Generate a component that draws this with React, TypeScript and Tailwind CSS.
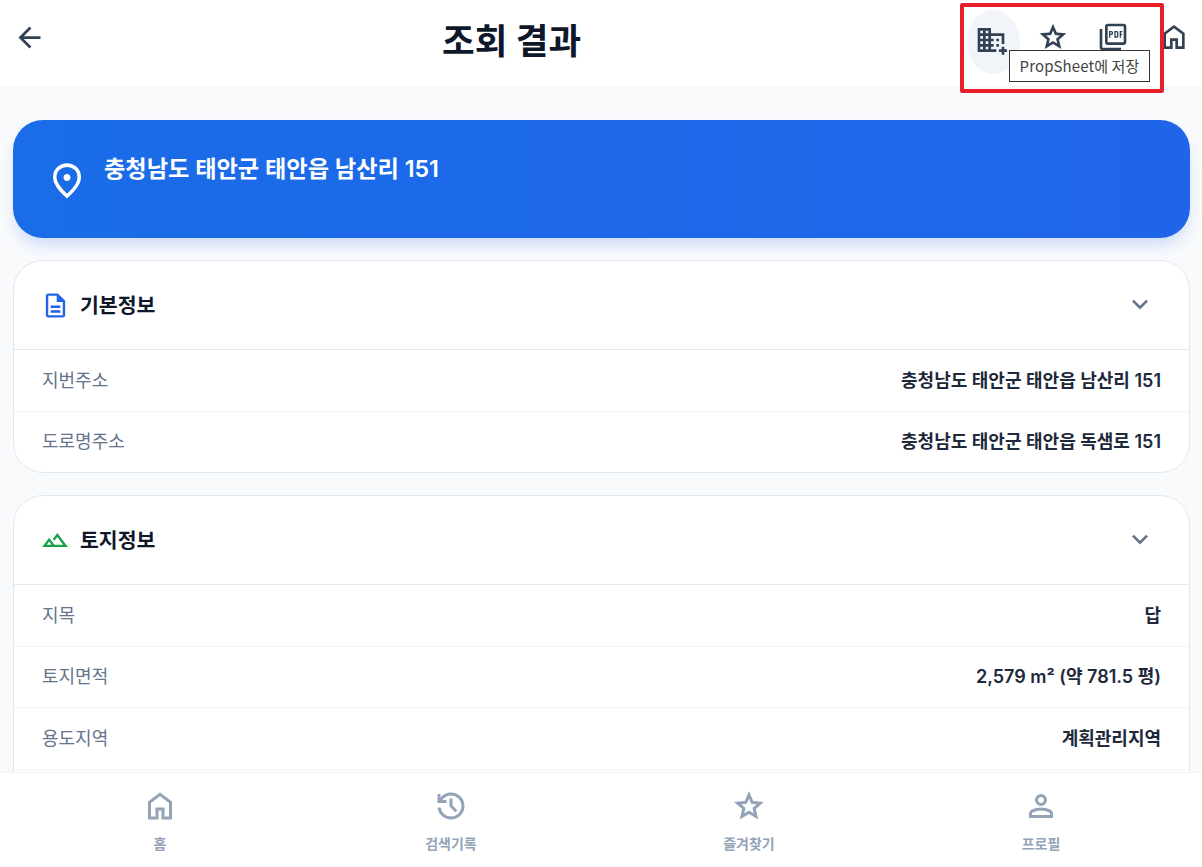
import React from 'react';

// Material Symbols outlines, 960 grid
const paths = {
  back: 'm313-440 224 224-57 56-320-320 320-320 57 56-224 224h487v80H313Z',
  domainAdd:
    'M80-120v-720h400v160h400v320h-80v-240H480v80h80v80h-80v80h80v80h-80v80h160v80H80Zm80-80h80v-80h-80v80Zm0-160h80v-80h-80v80Zm0-160h80v-80h-80v80Zm0-160h80v-80h-80v80Zm160 480h80v-80h-80v80Zm0-160h80v-80h-80v80Zm0-160h80v-80h-80v80Zm0-160h80v-80h-80v80ZM800-40v-80h-80v-80h80v-80h80v80h80v80h-80v80h-80ZM640-440v-80h80v80h-80Zm0 160v-80h80v80h-80Z',
  star: 'm354-287 126-76 126 77-33-144 111-96-146-13-58-136-58 135-146 13 111 97-33 143ZM233-120l65-281L80-590l288-25 112-265 112 265 288 25-218 189 65 281-247-149-247 149Z',
  pdf: 'M360-460h40v-80h40q17 0 28.5-11.5T480-580v-40q0-17-11.5-28.5T440-660h-80v200Zm40-120v-40h40v40h-40Zm120 120h80q17 0 28.5-11.5T640-500v-120q0-17-11.5-28.5T600-660h-80v200Zm40-40v-120h40v120h-40Zm120 40h40v-80h40v-40h-40v-40h40v-40h-80v200ZM320-240q-33 0-56.5-23.5T240-320v-480q0-33 23.5-56.5T320-880h480q33 0 56.5 23.5T880-800v480q0 33-23.5 56.5T800-240H320Zm0-80h480v-480H320v480ZM160-80q-33 0-56.5-23.5T80-160v-560h80v560h560v80H160Zm160-720v480-480Z',
  home: 'M240-200h120v-240h240v240h120v-360L480-740 240-560v360Zm-80 80v-480l320-240 320 240v480H520v-240h-80v240H160Z',
  pin: 'M480-480q33 0 56.5-23.5T560-560q0-33-23.5-56.5T480-640q-33 0-56.5 23.5T400-560q0 33 23.5 56.5T480-480Zm0 294q122-112 181-203.5T720-560q0-109-69.5-174.5T480-800q-101 0-170.5 65.5T240-560q0 71 59 162.5T480-186Zm0 106Q319-217 239.5-334.5T160-560q0-150 96.5-239T480-888q127 0 223.5 89T800-560q0 100-79.5 217.5T480-80Z',
  doc: 'M320-240h320v-80H320v80Zm0-160h320v-80H320v80ZM240-80q-33 0-56.5-23.5T160-160v-640q0-33 23.5-56.5T240-880h320l240 240v480q0 33-23.5 56.5T720-80H240Zm280-520v-200H240v640h480v-440H520ZM240-800v200-200 640-640Z',
  terrain: 'm40-240 240-320 180 240h300L560-586 460-454l-50-66 150-200 360 480H40Zm521-80Zm-361 0h160l-80-107-80 107Zm0 0h160-160Z',
  chevron: 'M480-344 240-584l56-56 184 184 184-184 56 56-240 240Z',
  history:
    'M480-120q-138 0-240.5-91.5T122-440h82q14 104 92.5 172T480-200q117 0 198.5-81.5T760-480q0-117-81.5-198.5T480-760q-69 0-129 32t-101 88h110v80H120v-240h80v94q51-64 124.5-99T480-840q150 0 255 105t105 255q0 150-105 255T480-120Zm112-192L440-464v-216h80v184l128 128-56 56Z',
  person:
    'M480-480q-66 0-113-47t-47-113q0-66 47-113t113-47q66 0 113 47t47 113q0 66-47 113t-113 47ZM160-160v-112q0-34 17.5-62.5T224-378q62-31 126-46.5T480-440q66 0 130 15.5T736-378q29 15 46.5 43.5T800-272v112H160Zm80-80h480v-32q0-11-5.5-20T700-306q-54-27-109-40.5T480-360q-56 0-111 13.5T260-306q-9 5-14.5 14t-5.5 20v32Zm240-320q33 0 56.5-23.5T560-640q0-33-23.5-56.5T480-720q-33 0-56.5 23.5T400-640q0 33 23.5 56.5T480-560Zm0-80Zm0 400Z',
};

const Icon: React.FC<{ name: keyof typeof paths; className: string }> = ({ name, className }) => (
  <svg viewBox="0 -960 960 960" fill="currentColor" className={`shrink-0 ${className}`}>
    <path d={paths[name]} />
  </svg>
);

const Row: React.FC<{ label: string; value: string; last?: boolean }> = ({ label, value, last }) => (
  <div className={`flex items-center justify-between px-[28px] ${last ? 'h-[60.5px]' : 'h-[61.5px] border-b border-[#f1f5f9]'}`}>
    <span className="text-[18px] text-[#64748b]">{label}</span>
    <span className="text-[18px] font-semibold text-[#1e293b]">{value}</span>
  </div>
);

const Section: React.FC<{ icon: React.ReactNode; title: string; children: React.ReactNode }> = ({ icon, title, children }) => (
  <section className="overflow-hidden rounded-[30px] border border-[#e2e8f0] bg-white">
    <div className="flex h-[89px] items-center justify-between border-b border-[#e2e8f0] pl-[26px] pr-[33px]">
      <div className="flex items-center gap-[10px]">
        <div className="flex w-[30px] justify-center">{icon}</div>
        <h2 className="mt-[3px] text-[20.5px] font-bold text-[#0f172a]">{title}</h2>
      </div>
      <Icon name="chevron" className="h-[32px] w-[32px] text-[#64748b]" />
    </div>
    {children}
  </section>
);

const tabs = [
  { icon: 'home' as const, label: '홈', box: 'ml-[144px] w-[32px]' },
  { icon: 'history' as const, label: '검색기록', box: 'ml-[249px] w-[52px]' },
  { icon: 'star' as const, label: '즐겨찾기', box: 'ml-[246px] w-[52px]' },
  { icon: 'person' as const, label: '프로필', box: 'ml-[246px] w-[40px]' },
];

export default function App() {
  return (
    <div className="relative flex h-[867px] flex-col overflow-hidden bg-[#f8fafc] font-['Inter','Noto_Sans_CJK_KR',sans-serif]">
      <header className="relative flex h-[87px] shrink-0 items-start border-b border-[#f1f5f9] bg-white">
        <Icon name="back" className="ml-[13px] mt-[21px] h-[33px] w-[33px] text-[#334155]" />
        <h1 className="absolute left-[442px] top-[18px] text-[35.5px] font-bold leading-[48px] text-[#0f172a]">조회 결과</h1>
        <div className="ml-auto mr-[12px] mt-[10px] flex items-start">
          <div className="flex h-[64px] w-[53px] items-center justify-center rounded-[50%] bg-[#f1f5f9]">
            <Icon name="domainAdd" className="mb-[4px] mr-[5px] h-[32px] w-[32px] text-[#334155]" />
          </div>
          <Icon name="star" className="ml-[17px] mt-[11px] h-[32px] w-[32px] text-[#334155]" />
          <Icon name="pdf" className="ml-[28px] mt-[11px] h-[32px] w-[32px] text-[#334155]" />
          <Icon name="home" className="ml-[29px] mt-[11px] h-[32px] w-[32px] text-[#334155]" />
        </div>
      </header>

      <main className="flex min-h-0 flex-1 flex-col gap-[22px] overflow-hidden pl-[13px] pr-[12px] pt-[33px]">
        <div className="flex h-[118px] shrink-0 rounded-[30px] bg-gradient-to-r from-[#1a6ce8] to-[#1f65ea] pl-[33px] pt-[32px] shadow-[0_10px_15px_-3px_rgba(37,99,235,0.2)]">
          <Icon name="pin" className="mt-[8px] h-[42px] w-[42px] text-white" />
          <p className="ml-[16px] mt-[1px] text-[23.2px] font-semibold leading-[32px] text-white">충청남도 태안군 태안읍 남산리 151</p>
        </div>

        <div className="shrink-0">
          <Section icon={<Icon name="doc" className="h-[29px] w-[29px] text-[#2563eb]" />} title="기본정보">
            <Row label="지번주소" value="충청남도 태안군 태안읍 남산리 151" />
            <Row label="도로명주소" value="충청남도 태안군 태안읍 독샘로 151" last />
          </Section>
        </div>

        <div className="shrink-0">
          <Section icon={<Icon name="terrain" className="h-[28px] w-[28px] text-[#16a34a]" />} title="토지정보">
            <Row label="지목" value="답" />
            <Row label="토지면적" value="2,579 m² (약 781.5 평)" />
            <Row label="용도지역" value="계획관리지역" />
            <Row label="공시지가" value="" last />
          </Section>
        </div>
      </main>

      <nav className="absolute inset-x-0 bottom-0 flex h-[95px] border-t border-[#f1f5f9] bg-white">
        {tabs.map(tab => (
          <div key={tab.label} className={`flex flex-col items-center pt-[15px] ${tab.box}`}>
            <Icon name={tab.icon} className="h-[36px] w-[36px] text-[#94a3b8]" />
            <span className="mt-[10px] whitespace-nowrap text-[14px] font-semibold leading-[20px] text-[#94a3b8]">{tab.label}</span>
          </div>
        ))}
      </nav>

      {/* annotation and tooltip sit over the header */}
      <div className="absolute left-[960px] top-[3px] h-[90px] w-[204px] rounded-[2px] border-[4px] border-[#e8202c]" />
      <div className="absolute left-[1009px] top-[50px] flex h-[32px] w-[141px] items-center justify-center border border-[#333] bg-white font-['Noto_Sans_CJK_KR',sans-serif] text-[15px] tracking-[0.1px] text-[#444]">
        PropSheet에 저장
      </div>
    </div>
  );
}
